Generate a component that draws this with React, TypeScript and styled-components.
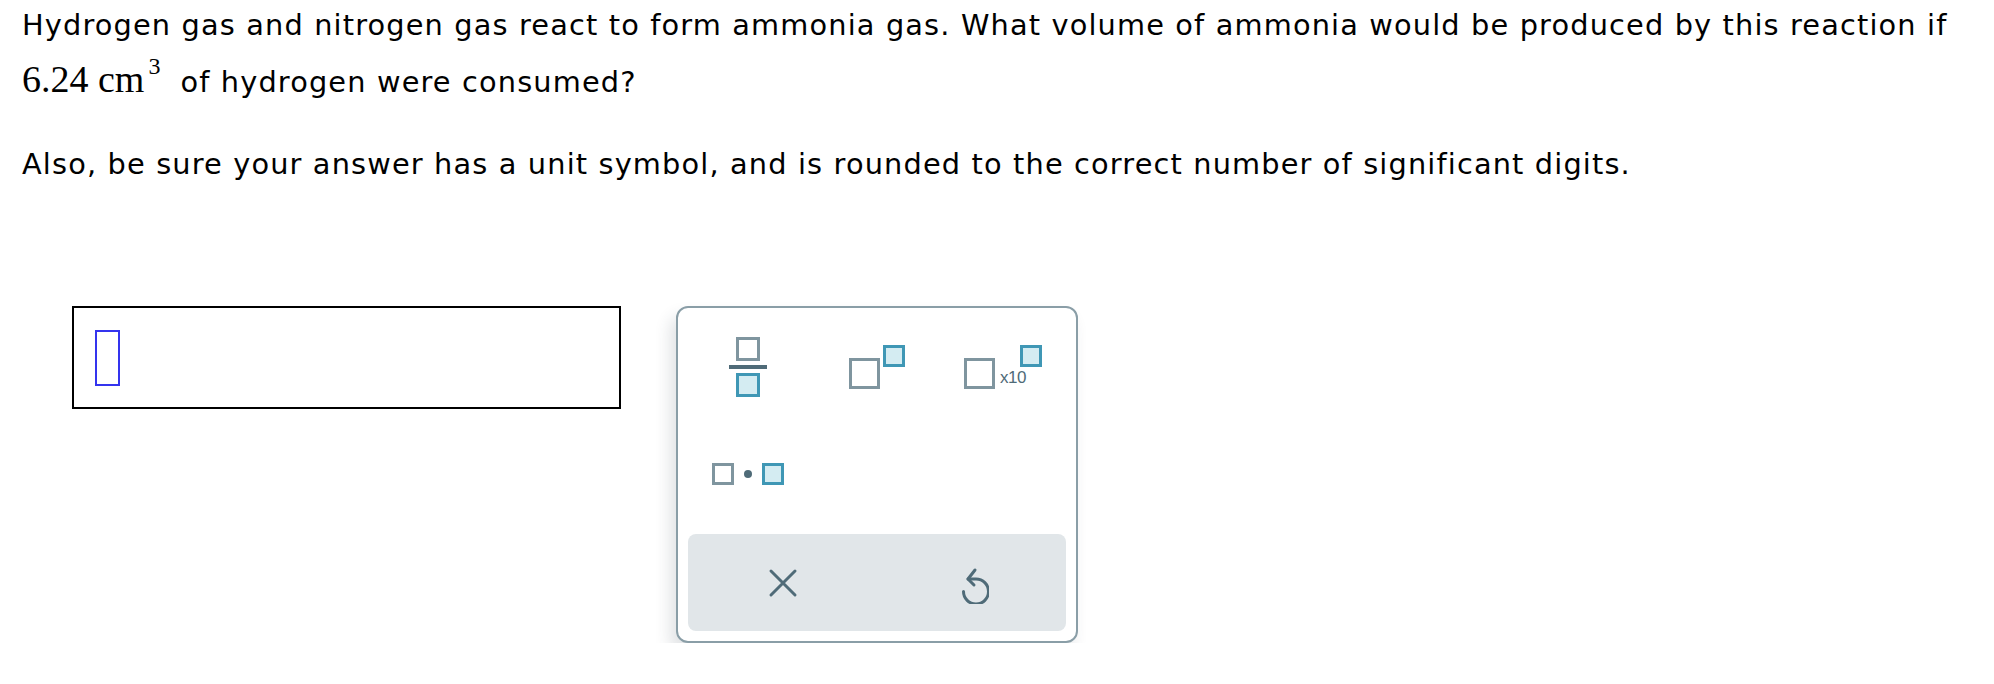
import React from "react";
import styled, { createGlobalStyle } from "styled-components";

const GlobalStyle = createGlobalStyle`
  html, body {
    margin: 0;
    padding: 0;
    background: #ffffff;
  }
`;

const Page = styled.div`
  padding: 0 0 0 22px;
  font-family: "DejaVu Sans", Verdana, sans-serif;
  font-size: 28.8px;
  letter-spacing: 1.15px;
  color: #000;
`;

const Question = styled.p`
  margin: -3px 0 0;
  line-height: 57px;
  white-space: nowrap;
`;

const Note = styled.p`
  margin: 25px 0 0;
  line-height: 57px;
`;

const MathValue = styled.span`
  font-family: "Liberation Serif", "Times New Roman", serif;
  font-size: 38px;
  line-height: 1;
  letter-spacing: 0;
  margin-right: 20px;
`;

const Sup = styled.sup`
  font-size: 24px;
  line-height: 0;
  vertical-align: 18px;
  margin-left: 4px;
`;

const AnswerRow = styled.div`
  display: flex;
  align-items: flex-start;
  gap: 55px;
  margin: 113px 0 0 50px;
`;

const AnswerBox = styled.div`
  box-sizing: border-box;
  width: 549px;
  height: 103px;
  border: 2px solid #000;
  padding: 22px 0 0 21px;
`;

const Caret = styled.div`
  box-sizing: border-box;
  width: 25px;
  height: 56px;
  border: 2px solid #3434ee;
`;

const Palette = styled.div`
  box-sizing: border-box;
  width: 402px;
  border: 2px solid #8a9ea7;
  border-radius: 12px;
  background: #fff;
  padding: 5px 10px 10px;
  box-shadow: -6px 10px 16px rgba(40, 60, 70, 0.14);
`;

const KeyGrid = styled.div`
  display: grid;
  grid-template-columns: repeat(3, 1fr);
  grid-auto-rows: 107px;
`;

const Key = styled.div`
  display: flex;
  align-items: center;
  justify-content: center;
`;

const Slot = styled.span<{ $size: number; $active?: boolean }>`
  box-sizing: border-box;
  display: block;
  width: ${(p) => p.$size}px;
  height: ${(p) => p.$size}px;
  border: 3px solid ${(p) => (p.$active ? "#3f97b5" : "#7f959f")};
  background: ${(p) => (p.$active ? "#d4ecf2" : "#fff")};
`;

const Fraction = styled.div`
  display: flex;
  flex-direction: column;
  align-items: center;
  gap: 4px;
  margin-left: -6px;
`;

const Bar = styled.span`
  display: block;
  width: 38px;
  height: 4px;
  background: #4f6b78;
`;

const Power = styled.div`
  display: flex;
  align-items: flex-start;
  gap: 3px;
  padding-top: 1px;
`;

const Base = styled(Slot)`
  margin-top: 13px;
`;

const SciTail = styled.div`
  position: relative;
  width: 44px;
  height: 43px;
`;

const Times10 = styled.span`
  position: absolute;
  left: 2px;
  bottom: 2px;
  font-family: "Liberation Sans", Arial, sans-serif;
  font-size: 17px;
  line-height: 1;
  color: #4f6b78;
  letter-spacing: -0.5px;
`;

const SciExp = styled(Slot)`
  position: absolute;
  right: 0;
  top: 0;
`;

const Product = styled.div`
  display: flex;
  align-items: center;
  gap: 10px;
  margin-left: -6px;
`;

const Dot = styled.span`
  display: block;
  width: 8px;
  height: 8px;
  border-radius: 50%;
  background: #4f6b78;
`;

const ActionBar = styled.div`
  display: grid;
  grid-template-columns: 1fr 1fr;
  height: 97px;
  margin-top: 7px;
  border-radius: 8px;
  background: #e1e6e9;
`;

const Action = styled.button`
  display: flex;
  align-items: center;
  justify-content: center;
  border: 0;
  background: transparent;
  padding: 0;
  cursor: pointer;
`;

function ClearIcon() {
  return (
    <svg width="30" height="30" viewBox="0 0 30 30" fill="none">
      <path
        d="M3 3 L27 27 M27 3 L3 27"
        stroke="#4f6b78"
        strokeWidth="3"
        strokeLinecap="round"
      />
    </svg>
  );
}

function UndoIcon() {
  return (
    <svg width="34" height="42" viewBox="0 0 34 42" fill="none">
      <path
        d="M13 17 L21 17 A12.5 12.5 0 1 1 8.5 29.5"
        stroke="#4f6b78"
        strokeWidth="3"
        strokeLinecap="round"
      />
      <path
        d="M20 8 L13 17 L19 23"
        stroke="#4f6b78"
        strokeWidth="3"
        strokeLinecap="round"
        strokeLinejoin="round"
      />
    </svg>
  );
}

export default function App() {
  return (
    <>
      <GlobalStyle />
      <Page>
        <Question>
          Hydrogen gas and nitrogen gas react to form ammonia gas. What volume
          of ammonia would be produced by this reaction if
          <br />
          <MathValue>
            6.24 cm<Sup>3</Sup>
          </MathValue>
          of hydrogen were consumed?
        </Question>
        <Note>
          Also, be sure your answer has a unit symbol, and is rounded to the
          correct number of significant digits.
        </Note>

        <AnswerRow>
          <AnswerBox>
            <Caret />
          </AnswerBox>

          <Palette>
            <KeyGrid>
              <Key>
                <Fraction>
                  <Slot $size={24} />
                  <Bar />
                  <Slot $size={24} $active />
                </Fraction>
              </Key>
              <Key>
                <Power>
                  <Base $size={31} />
                  <Slot $size={22} $active />
                </Power>
              </Key>
              <Key>
                <Power>
                  <Base $size={31} />
                  <SciTail>
                    <Times10>x10</Times10>
                    <SciExp $size={22} $active />
                  </SciTail>
                </Power>
              </Key>
              <Key>
                <Product>
                  <Slot $size={22} />
                  <Dot />
                  <Slot $size={22} $active />
                </Product>
              </Key>
            </KeyGrid>
            <ActionBar>
              <Action aria-label="clear">
                <ClearIcon />
              </Action>
              <Action aria-label="undo">
                <UndoIcon />
              </Action>
            </ActionBar>
          </Palette>
        </AnswerRow>
      </Page>
    </>
  );
}
